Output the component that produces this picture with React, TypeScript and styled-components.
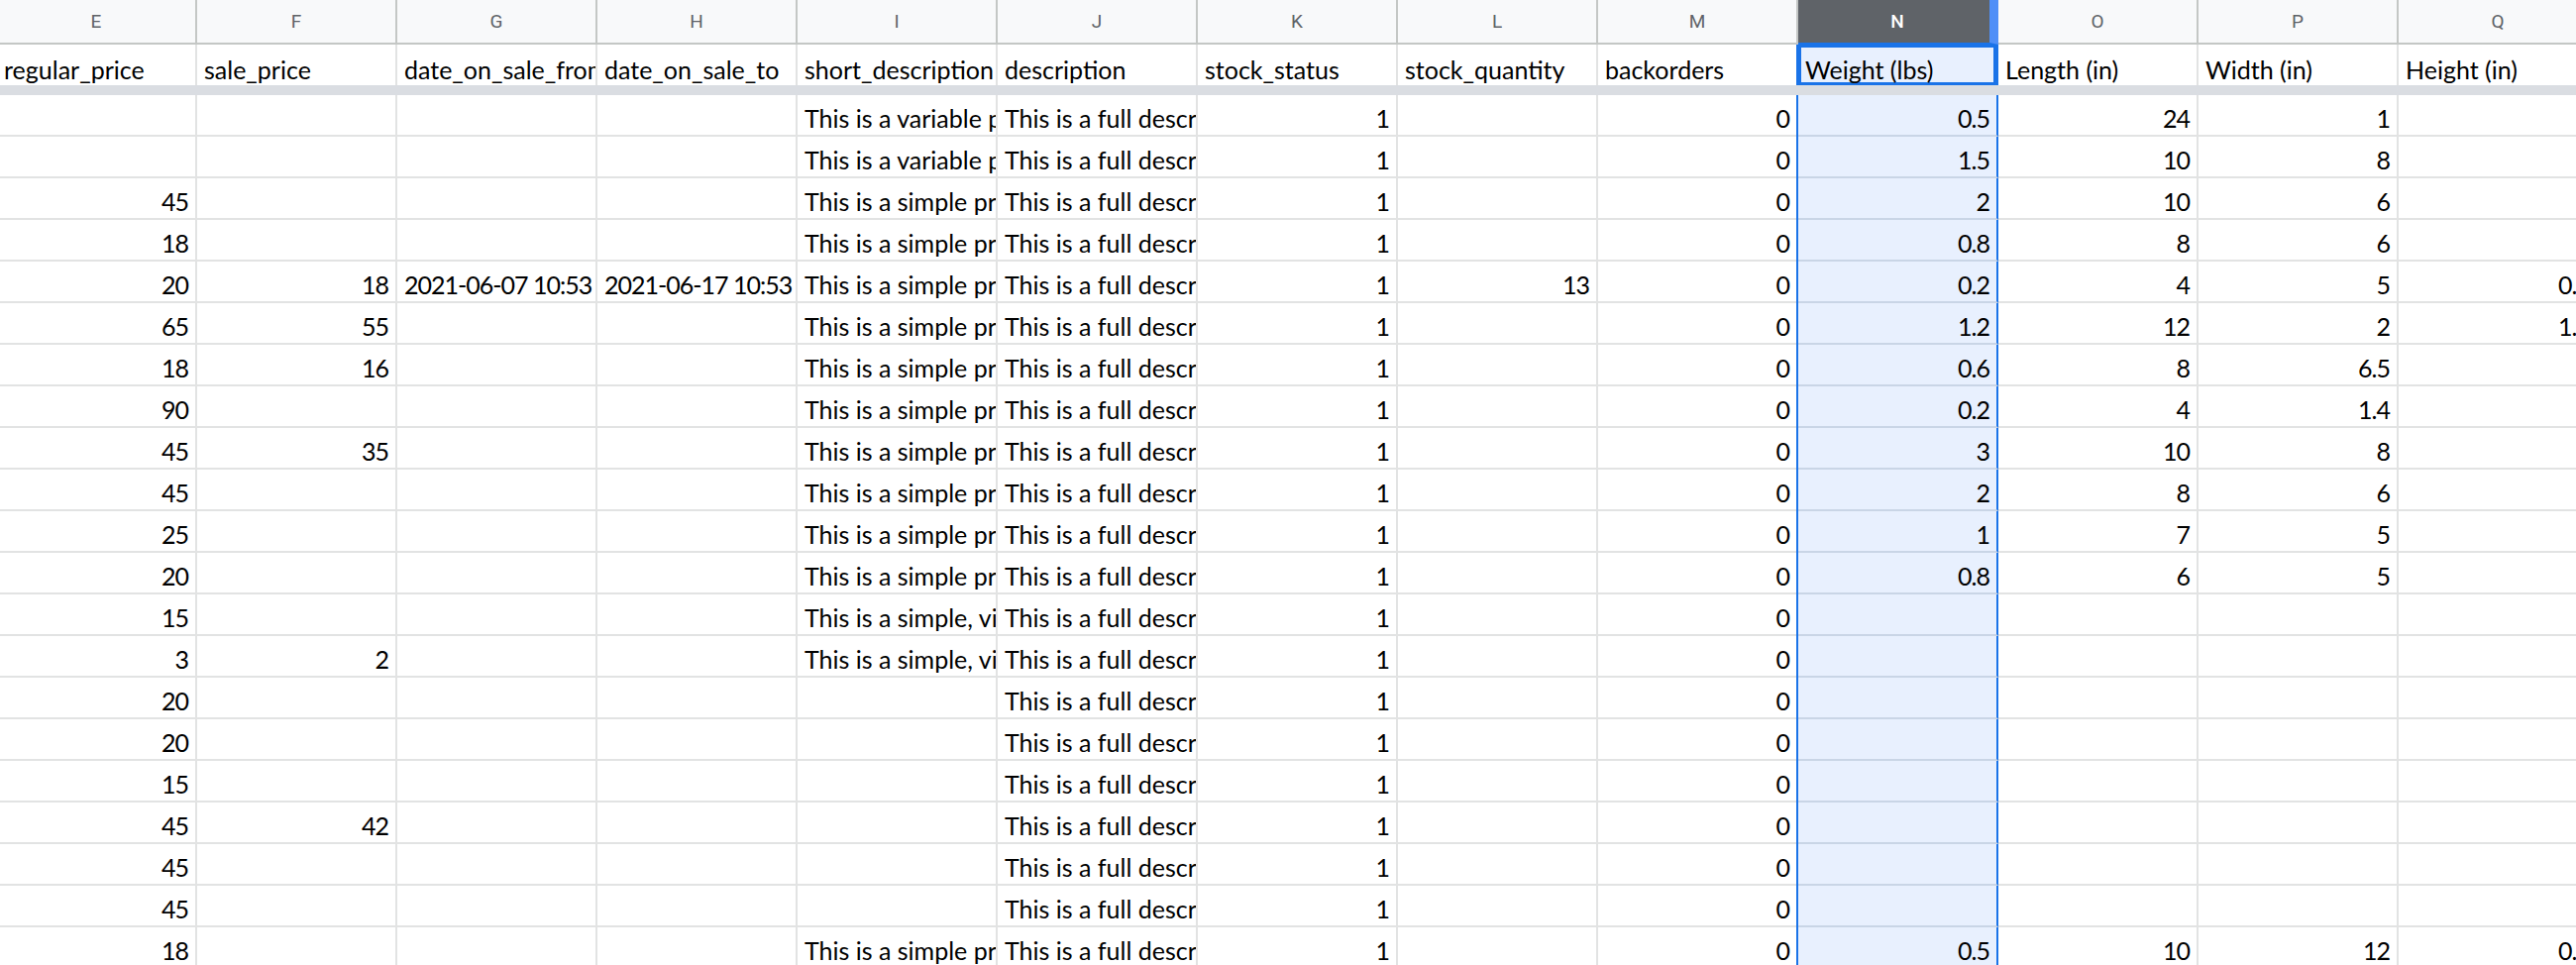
import styled, { createGlobalStyle } from 'styled-components';

const GlobalStyle = createGlobalStyle`
  html, body {
    margin: 0;
    padding: 0;
    background: #ffffff;
    overflow: hidden;
  }
`;

const COL_WIDTH = 202;
const LETTERS = ['E', 'F', 'G', 'H', 'I', 'J', 'K', 'L', 'M', 'N', 'O', 'P', 'Q'];
const SELECTED = 9; // column N

const Viewport = styled.div`
  width: 2600px;
  height: 974px;
  overflow: hidden;
  background: #ffffff;
`;

const Sheet = styled.div`
  margin-left: -3px;
  width: ${COL_WIDTH * LETTERS.length}px;
  display: flex;
  flex-direction: column;
`;

const Row = styled.div`
  display: grid;
  grid-template-columns: repeat(${LETTERS.length}, ${COL_WIDTH}px);
`;

const ColumnLetter = styled.div<{ $selected?: boolean }>`
  box-sizing: border-box;
  height: 45px;
  display: flex;
  align-items: center;
  justify-content: center;
  font-family: Roboto, 'Liberation Sans', sans-serif;
  font-size: 19px;
  color: ${(p) => (p.$selected ? '#ffffff' : '#5f6368')};
  font-weight: ${(p) => (p.$selected ? 500 : 400)};
  background: ${(p) => (p.$selected ? '#5f6368' : '#f8f9fa')};
  border-right: ${(p) => (p.$selected ? '9px solid #4f8ff7' : '2px solid #c4c7c5')};
  border-bottom: 2px solid ${(p) => (p.$selected ? '#1a73e8' : '#c4c7c5')};
  padding-left: ${(p) => (p.$selected ? '7px' : '0')};
`;

const Cell = styled.div<{
  $align?: 'left' | 'right';
  $selected?: boolean;
  $title?: boolean;
  $digits?: boolean;
}>`
  box-sizing: border-box;
  height: ${(p) => (p.$title ? 41 : 42)}px;
  display: flex;
  align-items: flex-end;
  justify-content: ${(p) => (p.$align === 'right' ? 'flex-end' : 'flex-start')};
  padding: 0 7px ${(p) => (p.$title ? 1 : 2)}px 7px;
  overflow: hidden;
  white-space: nowrap;
  font-family: Lato, 'Open Sans', sans-serif;
  font-size: 25px;
  line-height: 1.2;
  letter-spacing: ${(p) => (p.$digits ? '-1px' : 'normal')};
  color: #000000;
  background: ${(p) => (p.$selected ? '#e8f0fe' : '#ffffff')};
  border-right: 2px solid ${(p) => (p.$selected ? '#1a73e8' : '#e2e3e3')};
  border-bottom: ${(p) => (p.$title ? 'none' : `2px solid ${p.$selected ? '#c9d5e6' : '#e2e3e3'}`)};
  box-shadow: ${(p) =>
    p.$selected ? (p.$title ? 'inset 0 0 0 3px #1a73e8, -2px 0 0 #1a73e8' : '-2px 0 0 #1a73e8') : 'none'};
`;

const FreezeBand = styled.div`
  height: 10px;
  background: #dadde2;
`;

const TITLES = [
  'regular_price',
  'sale_price',
  'date_on_sale_from',
  'date_on_sale_to',
  'short_description',
  'description',
  'stock_status',
  'stock_quantity',
  'backorders',
  'Weight (lbs)',
  'Length (in)',
  'Width (in)',
  'Height (in)',
];

const VAR = 'This is a variable product.';
const SIMPLE = 'This is a simple product.';
const VIRTUAL = 'This is a simple, virtual product.';
const FULL = 'This is a full description of the product.';

type Value = string | number | null;

// E, F, G, H, I, J, K, L, M, N, O, P, Q
const ROWS: Value[][] = [
  [null, null, null, null, VAR, FULL, 1, null, 0, 0.5, 24, 1, null],
  [null, null, null, null, VAR, FULL, 1, null, 0, 1.5, 10, 8, null],
  [45, null, null, null, SIMPLE, FULL, 1, null, 0, 2, 10, 6, null],
  [18, null, null, null, SIMPLE, FULL, 1, null, 0, 0.8, 8, 6, null],
  [20, 18, '2021-06-07 10:53', '2021-06-17 10:53', SIMPLE, FULL, 1, 13, 0, 0.2, 4, 5, 0.5],
  [65, 55, null, null, SIMPLE, FULL, 1, null, 0, 1.2, 12, 2, 1.5],
  [18, 16, null, null, SIMPLE, FULL, 1, null, 0, 0.6, 8, 6.5, null],
  [90, null, null, null, SIMPLE, FULL, 1, null, 0, 0.2, 4, 1.4, null],
  [45, 35, null, null, SIMPLE, FULL, 1, null, 0, 3, 10, 8, null],
  [45, null, null, null, SIMPLE, FULL, 1, null, 0, 2, 8, 6, null],
  [25, null, null, null, SIMPLE, FULL, 1, null, 0, 1, 7, 5, null],
  [20, null, null, null, SIMPLE, FULL, 1, null, 0, 0.8, 6, 5, null],
  [15, null, null, null, VIRTUAL, FULL, 1, null, 0, null, null, null, null],
  [3, 2, null, null, VIRTUAL, FULL, 1, null, 0, null, null, null, null],
  [20, null, null, null, null, FULL, 1, null, 0, null, null, null, null],
  [20, null, null, null, null, FULL, 1, null, 0, null, null, null, null],
  [15, null, null, null, null, FULL, 1, null, 0, null, null, null, null],
  [45, 42, null, null, null, FULL, 1, null, 0, null, null, null, null],
  [45, null, null, null, null, FULL, 1, null, 0, null, null, null, null],
  [45, null, null, null, null, FULL, 1, null, 0, null, null, null, null],
  [18, null, null, null, SIMPLE, FULL, 1, null, 0, 0.5, 10, 12, 0.5],
];

const alignOf = (v: Value) => (typeof v === 'number' ? 'right' : 'left');
const isDigits = (v: Value) => typeof v === 'number' || (typeof v === 'string' && /^[\d\s:.-]+$/.test(v));

export default function App() {
  return (
    <Viewport>
      <GlobalStyle />
      <Sheet>
        <Row>
          {LETTERS.map((l, i) => (
            <ColumnLetter key={l} $selected={i === SELECTED}>
              {l}
            </ColumnLetter>
          ))}
        </Row>
        <Row>
          {TITLES.map((t, i) => (
            <Cell key={t} $title $selected={i === SELECTED}>
              {t}
            </Cell>
          ))}
        </Row>
        <FreezeBand />
        {ROWS.map((row, r) => (
          <Row key={r}>
            {row.map((v, c) => (
              <Cell key={c} $align={alignOf(v)} $digits={isDigits(v)} $selected={c === SELECTED}>
                {v ?? ''}
              </Cell>
            ))}
          </Row>
        ))}
      </Sheet>
    </Viewport>
  );
}
